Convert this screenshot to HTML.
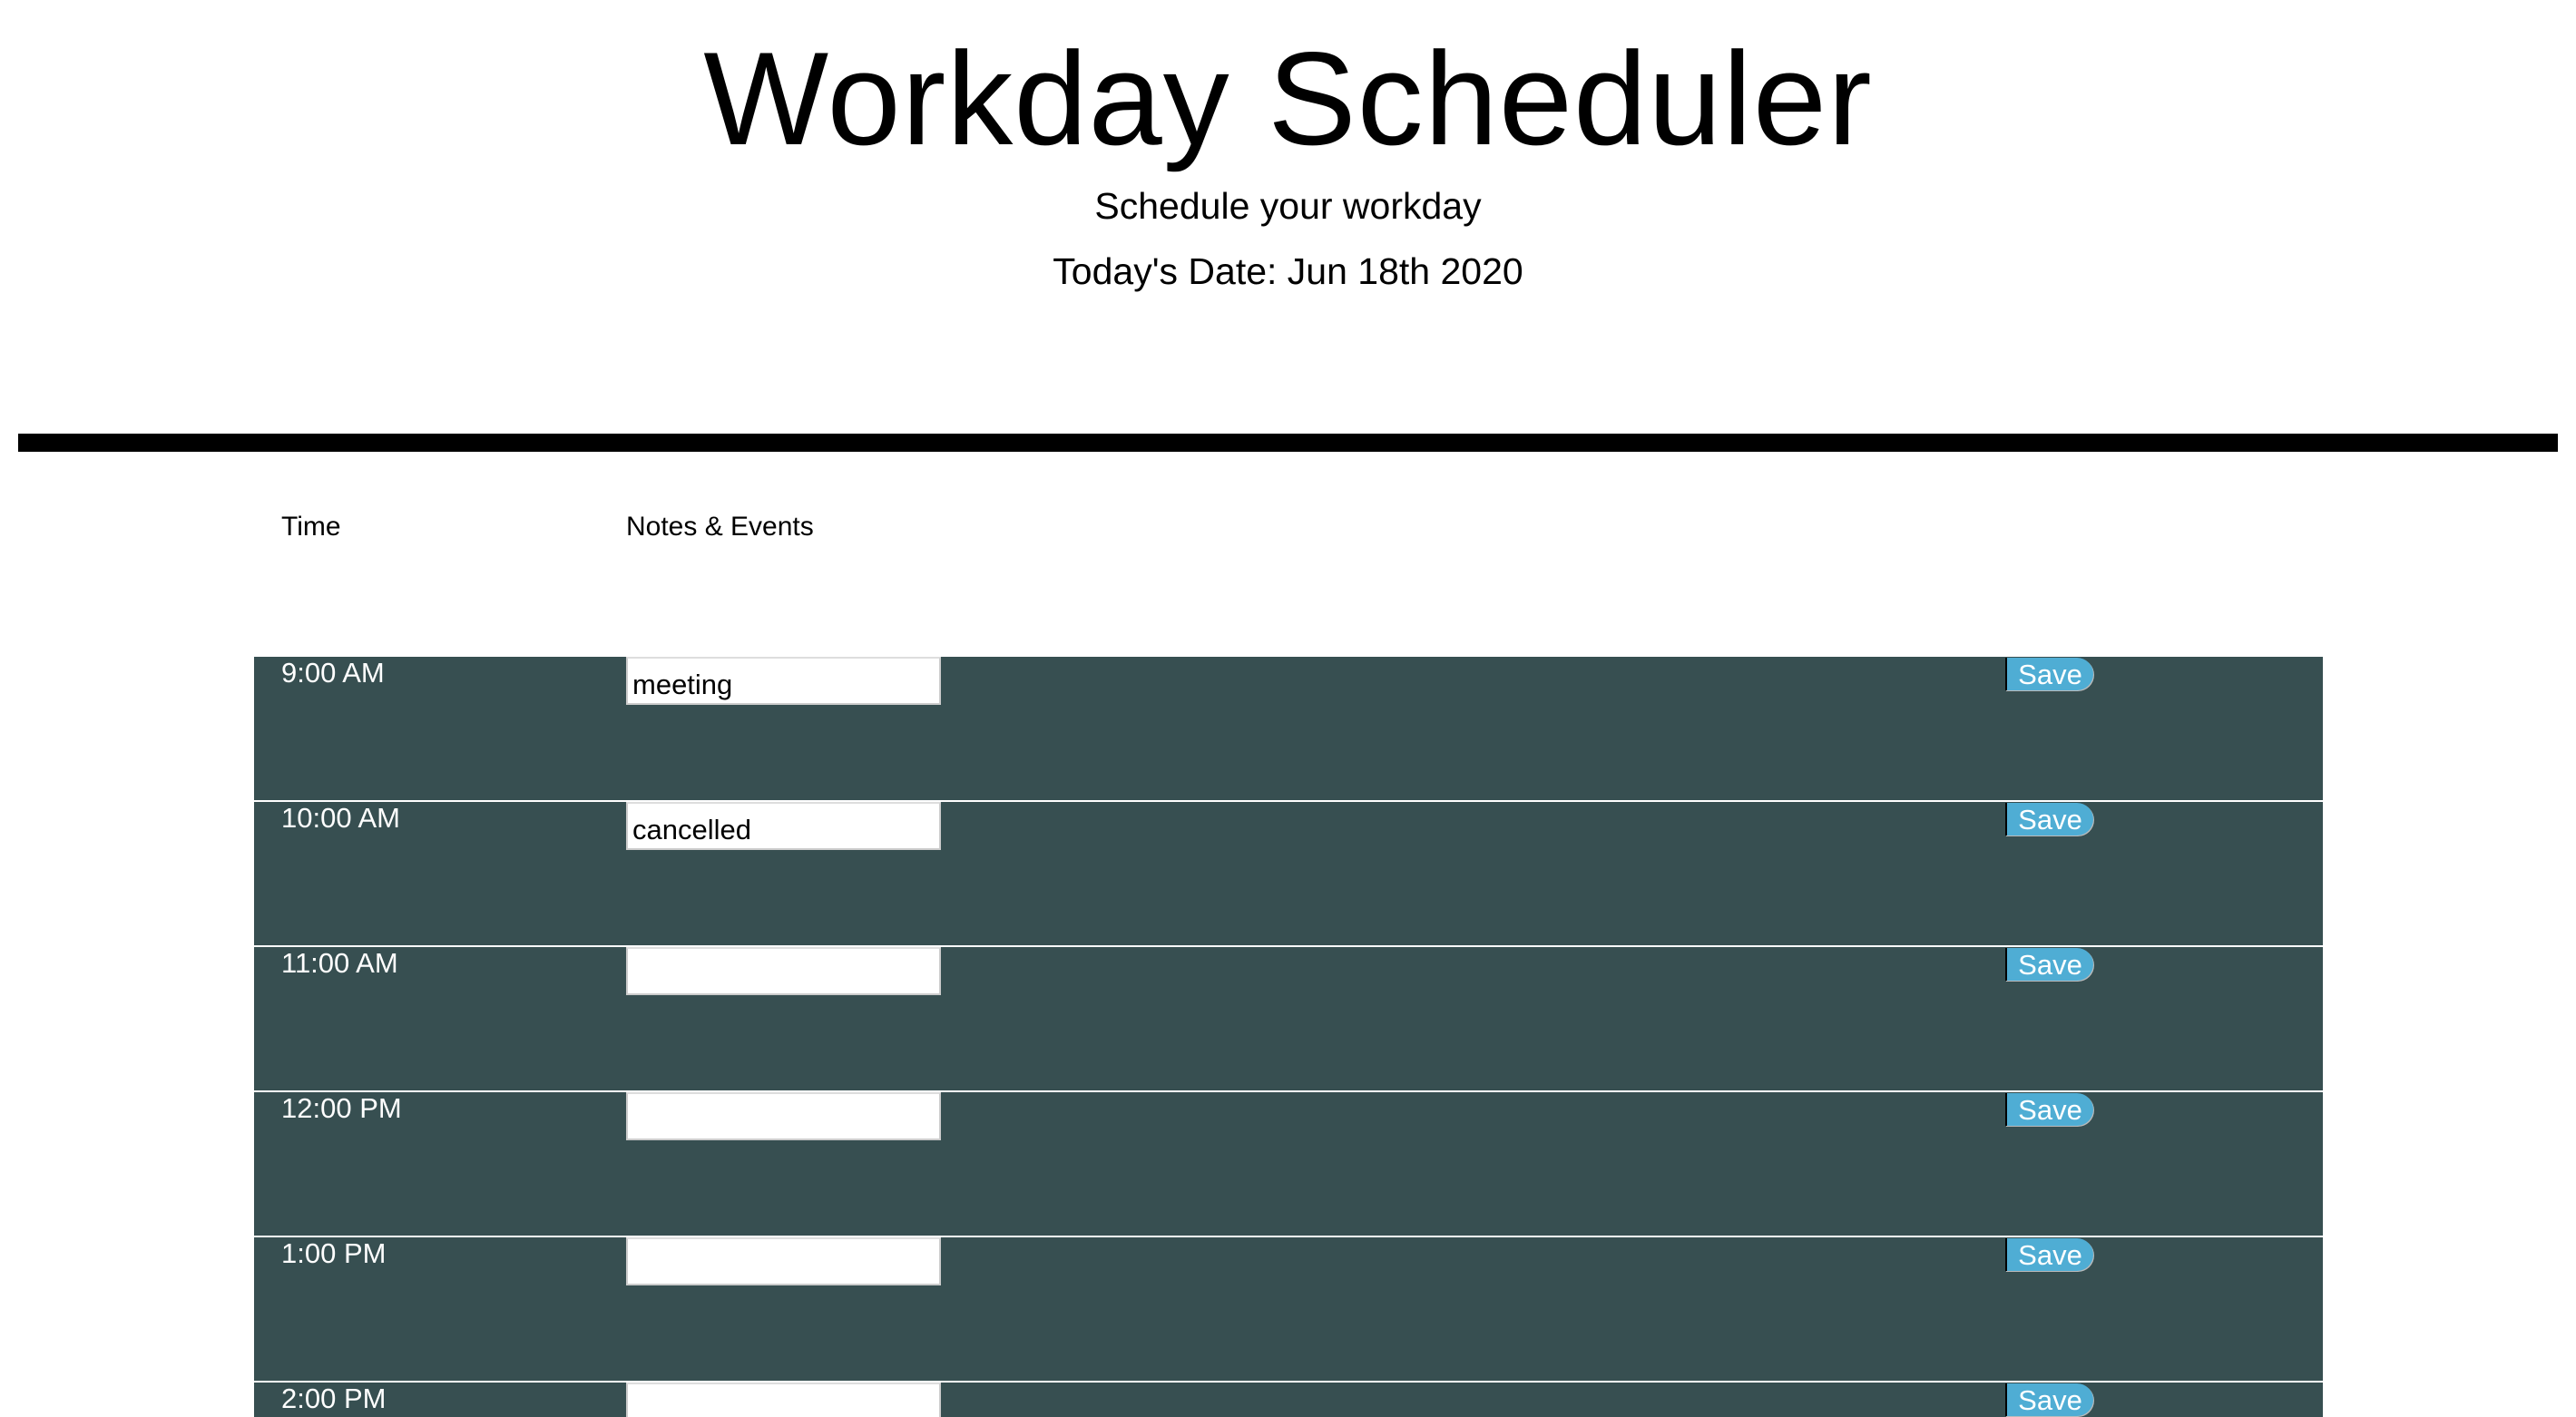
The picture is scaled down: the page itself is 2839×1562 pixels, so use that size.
<!DOCTYPE html>
<html style="overflow:hidden"><head><style>
html,body{margin:0;overflow:hidden}
body{background:#fff;font-family:"Liberation Sans",sans-serif}
#w{position:relative;width:2839px;height:1562px;overflow:hidden}
.a{position:absolute;white-space:nowrap}
h1{position:absolute;left:0;width:2839px;text-align:center;top:24px;margin:0;font-weight:normal;font-size:146px;line-height:170px;letter-spacing:1px}
.c{position:absolute;left:0;width:2839px;text-align:center;font-size:41px}
.bar{position:absolute;left:20px;top:478px;width:2799px;height:20px;background:#000}
.row{position:absolute;left:280px;width:2280px;height:158px;background:#374f51;overflow:hidden}
.t{position:absolute;left:30px;top:-4px;color:#fff;font-size:31px;line-height:44px}
.ta{position:absolute;left:410px;top:0;height:49px;background:#fff;border:2px solid #ccc;border-top-color:#ddd;font-size:31px;line-height:58px;padding-left:5px;width:338px}
.s{position:absolute;left:1930px;top:1px;width:95px;height:36px;background:#4fadd4;border-left:2px solid #000;border-radius:0 20px 20px 0;box-shadow:1px 1px 0 #bbb;color:#fff;font-size:31px;line-height:38px;text-align:center}
</style></head><body><div id="w">
<h1>Workday Scheduler</h1>
<div class="c" style="top:204px">Schedule your workday</div>
<div class="c" style="top:276px">Today's Date: Jun 18th 2020</div>
<div class="bar"></div>
<div class="a" style="left:310px;top:564px;font-size:30px">Time</div>
<div class="a" style="left:690px;top:564px;font-size:30px">Notes &amp; Events</div>
<div class="row" style="top:724px"><div class="t">9:00 AM</div><div class="ta">meeting</div><div class="s">Save</div></div>
<div class="row" style="top:884px"><div class="t">10:00 AM</div><div class="ta">cancelled</div><div class="s">Save</div></div>
<div class="row" style="top:1044px"><div class="t">11:00 AM</div><div class="ta"></div><div class="s">Save</div></div>
<div class="row" style="top:1204px"><div class="t">12:00 PM</div><div class="ta"></div><div class="s">Save</div></div>
<div class="row" style="top:1364px"><div class="t">1:00 PM</div><div class="ta"></div><div class="s">Save</div></div>
<div class="row" style="top:1524px;height:38px"><div class="t">2:00 PM</div><div class="ta"></div><div class="s">Save</div></div>
</div></body></html>
